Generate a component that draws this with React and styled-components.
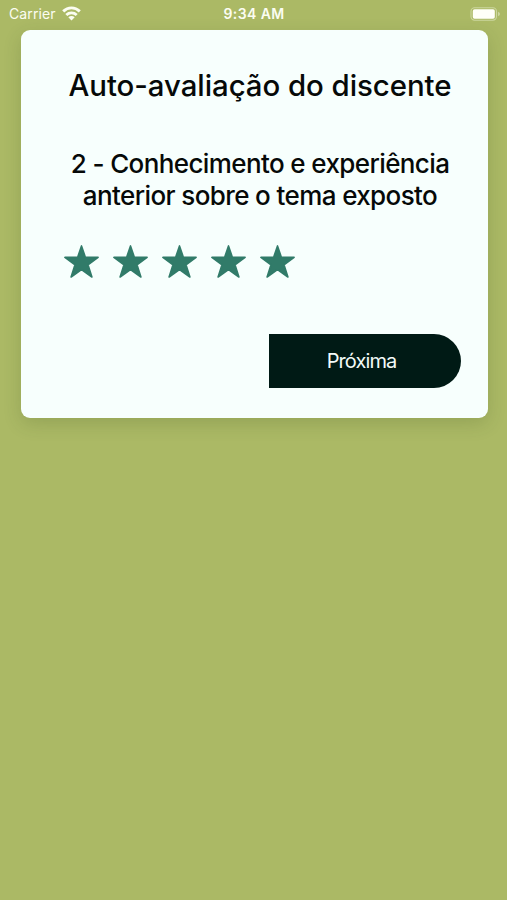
import React from "react";
import styled, { createGlobalStyle } from "styled-components";

const GlobalStyle = createGlobalStyle`
  * { box-sizing: border-box; }
  body {
    margin: 0;
    background: #abb965;
    font-family: Inter, "Liberation Sans", sans-serif;
  }
`;

const Screen = styled.div`
  min-height: 900px;
  background: #abb965;
  overflow: hidden;
`;

const StatusBar = styled.header`
  display: grid;
  grid-template-columns: 1fr auto 1fr;
  align-items: center;
  height: 30px;
  padding: 0 6px 3px 9px;
  color: #fbfdf2;
  font-size: 14px;
  line-height: 20px;
`;

const Carrier = styled.div`
  display: flex;
  align-items: center;
  gap: 6px;
  letter-spacing: 0.12px;

  svg {
    margin-top: -1px;
  }
`;

const Clock = styled.div`
  font-weight: 600;
  letter-spacing: 0.4px;
  padding-right: 2px;
`;

const Battery = styled.div`
  display: flex;
  justify-content: flex-end;
`;

const Card = styled.main`
  display: flex;
  flex-direction: column;
  width: 467px;
  height: 388px;
  margin-left: 20.5px;
  padding: 38px 27px 30px 39px;
  border-radius: 9px;
  background: #f7fffd;
  box-shadow: 0 6px 18px rgba(50, 70, 25, 0.18);
`;

const Title = styled.h1`
  margin: 0;
  font-size: 29.4px;
  font-weight: 450;
  line-height: 36px;
  letter-spacing: -0.05px;
  text-align: center;
  white-space: nowrap;
  color: #060908;
`;

const Question = styled.h2`
  margin: 44px 0 0;
  font-size: 26px;
  font-weight: 450;
  line-height: 32px;
  letter-spacing: -0.61px;
  text-align: center;
  white-space: nowrap;
  color: #060908;
`;

const Line = styled.span`
  display: block;
`;

const Rating = styled.div`
  display: flex;
  gap: 14px;
  margin: 32.5px 0 0 4.5px;
`;

const Star = styled.svg`
  width: 35px;
  height: 33px;
  fill: #317b69;
  stroke: #317b69;
  stroke-width: 1.6;
  stroke-linejoin: round;
`;

const NextButton = styled.button`
  align-self: flex-end;
  width: 192px;
  height: 54.5px;
  margin-top: auto;
  padding: 1px 6px 0 0;
  border: 0;
  border-radius: 0 27.25px 27.25px 0;
  background: #001a15;
  color: #f3fbf9;
  font: 400 20px/24px Inter, "Liberation Sans", sans-serif;
  letter-spacing: -0.9px;
`;

export default function App() {
  return (
    <>
      <GlobalStyle />
      <Screen>
        <StatusBar>
          <Carrier>
            <span>Carrier</span>
            <svg width="19" height="15" viewBox="0 0 19 15" fill="none" stroke="#fbfdf2" strokeWidth="2.9">
              <path d="M1.2 5.4C6 .7 13 .7 17.8 5.4" />
              <path d="M4.3 9C7.3 6.2 11.7 6.2 14.7 9" />
              <path d="M9.5 14.4 6.3 11.3Q9.5 8.8 12.7 11.3Z" fill="#fbfdf2" stroke="none" />
            </svg>
          </Carrier>
          <Clock>9:34 AM</Clock>
          <Battery>
            <svg width="31" height="14" viewBox="0 0 31 14">
              <rect x="1" y=".8" width="25.5" height="12.4" rx="3.6" fill="none" stroke="#ccd69e" strokeWidth="1.1" />
              <rect x="2.8" y="2.3" width="22" height="9.4" rx="1.8" fill="#fffff8" />
              <path d="M28 4.8Q30 5.6 30 7T28 9.2Z" fill="#ccd69e" />
            </svg>
          </Battery>
        </StatusBar>
        <Card>
          <Title>Auto-avaliação do discente</Title>
          <Question>
            <Line>2 - Conhecimento e experiência</Line>
            <Line>anterior sobre o tema exposto</Line>
          </Question>
          <Rating>
            {[1, 2, 3, 4, 5].map((value) => (
              <Star key={value} viewBox="0 0 35 33">
                <path d="M17.5.9 21.4 12.4H34.1L24 19.8 27.9 32 17.5 24.7 7.1 32 11 19.8.9 12.4H13.6Z" />
              </Star>
            ))}
          </Rating>
          <NextButton type="button">Próxima</NextButton>
        </Card>
      </Screen>
    </>
  );
}
